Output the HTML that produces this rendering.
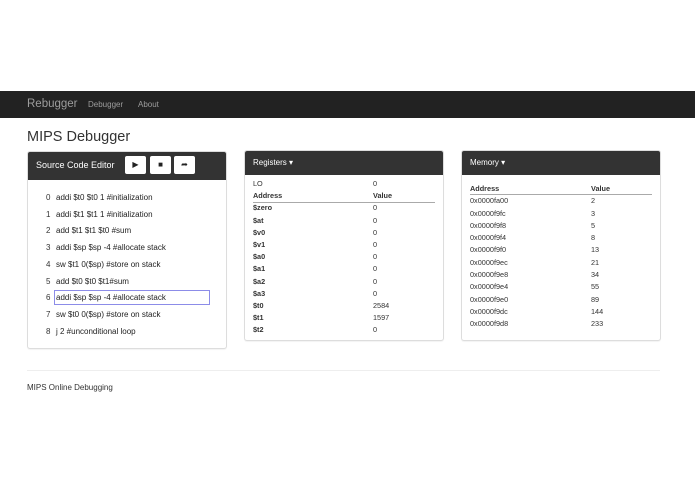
<!DOCTYPE html><html><head><style>
body{margin:0;width:695px;height:494px;background:#fff;font-family:"Liberation Sans",sans-serif;color:#333;position:relative;overflow:hidden}
.a{position:absolute;white-space:nowrap}
.nav{position:absolute;left:0;top:91px;width:695px;height:27px;background:#222}
.panel{position:absolute;border:1px solid #ddd;border-radius:3px;background:#fff;box-shadow:0 1px 1px rgba(0,0,0,.05)}
.hd{background:#333;color:#fff;height:24px;border-radius:2px 2px 0 0}
.btn{position:absolute;top:4px;width:21px;height:18px;background:#fff;border-radius:2px;color:#222;font-size:8px;text-align:center;line-height:18px}
.f8{font-size:8px}
.f7{font-size:7.3px}
</style></head><body>
<div class="nav"></div>
<div class="a" style="left:27px;top:98px;font-size:11.5px;color:#9d9d9d">Rebugger</div>
<div class="a f8" style="left:88px;top:100px;color:#9d9d9d">Debugger</div>
<div class="a f8" style="left:138px;top:100px;color:#9d9d9d">About</div>
<div class="a" style="left:27px;top:129px;font-size:14.5px;color:#333">MIPS Debugger</div>

<div class="panel" style="left:27px;top:151px;width:198px;height:196px">
<div class="hd" style="height:28px"></div>
<div class="a" style="left:8px;top:8px;color:#fff;font-size:9px">Source Code Editor</div>
<div class="btn" style="left:97px;top:4px">&#9654;</div>
<div class="btn" style="left:122px;top:4px">&#9632;</div>
<div class="btn" style="left:146px;top:4px">&#10150;</div>
</div>
<div class="a" style="left:54px;top:290px;width:154px;height:13px;border:1px solid #8c8ce8"></div>
<div class="a f8" style="left:46px;top:190px;line-height:16.7px">0<br>1<br>2<br>3<br>4<br>5<br>6<br>7<br>8</div>
<div class="a f8" style="left:56px;top:190px;line-height:16.7px;color:#222">addi $t0 $t0 1 #initialization<br>addi $t1 $t1 1 #initialization<br>add $t1 $t1 $t0 #sum<br>addi $sp $sp -4 #allocate stack<br>sw $t1 0($sp) #store on stack<br>add $t0 $t0 $t1#sum<br>addi $sp $sp -4 #allocate stack<br>sw $t0 0($sp) #store on stack<br>j 2 #unconditional loop</div>

<div class="panel" style="left:244px;top:150px;width:198px;height:189px;overflow:hidden">
<div class="hd"></div>
<div class="a f8" style="left:8px;top:7px;color:#fff">Registers &#9662;</div>
<div class="a" style="left:0;top:30px;width:198px;height:152px;overflow:hidden">
<div class="a f7" style="left:8px;top:-3px;line-height:12.2px;color:#333">LO<br><b>Address</b><br><b>$zero<br>$at<br>$v0<br>$v1<br>$a0<br>$a1<br>$a2<br>$a3<br>$t0<br>$t1<br>$t2</b></div>
<div class="a f7" style="left:128px;top:-3px;line-height:12.2px">0<br><b>Value</b><br>0<br>0<br>0<br>0<br>0<br>0<br>0<br>0<br>2584<br>1597<br>0</div>
<div class="a" style="left:8px;top:21px;width:182px;border-top:1px solid #aaa"></div>
</div>
</div>

<div class="panel" style="left:461px;top:150px;width:198px;height:189px">
<div class="hd"></div>
<div class="a f8" style="left:8px;top:7px;color:#fff">Memory &#9662;</div>
<div class="a f7" style="left:8px;top:32px;line-height:12.3px"><b>Address</b><br>0x0000fa00<br>0x0000f9fc<br>0x0000f9f8<br>0x0000f9f4<br>0x0000f9f0<br>0x0000f9ec<br>0x0000f9e8<br>0x0000f9e4<br>0x0000f9e0<br>0x0000f9dc<br>0x0000f9d8</div>
<div class="a f7" style="left:129px;top:32px;line-height:12.3px"><b>Value</b><br>2<br>3<br>5<br>8<br>13<br>21<br>34<br>55<br>89<br>144<br>233</div>
<div class="a" style="left:8px;top:43px;width:182px;border-top:1px solid #aaa"></div>
</div>

<div class="a" style="left:27px;top:370px;width:633px;border-top:1px solid #eee"></div>
<div class="a f8" style="left:27px;top:383px;color:#333">MIPS Online Debugging</div>
</body></html>
